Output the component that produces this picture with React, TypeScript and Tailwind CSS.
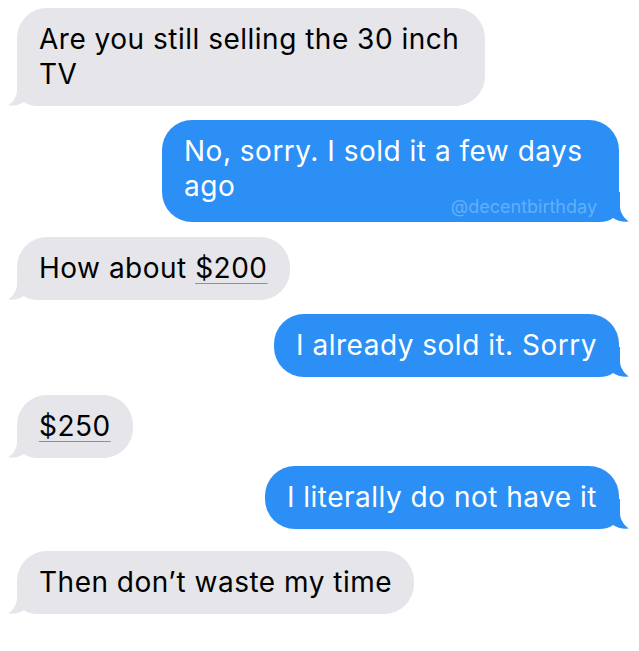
const GRAY = "#e5e5ea";
const BLUE = "#2b8ff6";

function TailLeft() {
  return (
    <svg
      className="absolute bottom-0 left-[-9px]"
      width="40"
      height="30"
      viewBox="0 0 40 30"
    >
      <path
        d="M9 0 L9 14 C9 21 5 26 0 29.6 C7 30.2 12 28.5 16 26 C19 28.5 24 30 30 30 L40 30 L40 0 Z"
        fill={GRAY}
      />
    </svg>
  );
}

function TailRight() {
  return (
    <svg
      className="absolute bottom-0 right-[-10px]"
      width="40"
      height="30"
      viewBox="0 0 40 30"
    >
      <path
        d="M31 0 L31 14 C31 21 35 26 40 29.6 C33 30.2 28 28.5 24 26 C21 28.5 16 30 10 30 L0 30 L0 0 Z"
        fill={BLUE}
      />
    </svg>
  );
}

function Received({ children, className = "" }: { children: React.ReactNode; className?: string }) {
  return (
    <div className={`self-start ml-[17px] ${className}`}>
      <div className="relative rounded-[30px] bg-[#e5e5ea] px-[22px] py-[14px] text-[28px] leading-[35px] tracking-[0.5px] text-black">
        <TailLeft />
        <span className="relative">{children}</span>
      </div>
    </div>
  );
}

function Sent({
  children,
  className = "",
  watermark = false,
}: {
  children: React.ReactNode;
  className?: string;
  watermark?: boolean;
}) {
  return (
    <div className={`self-end mr-[20px] ${className}`}>
      <div className="relative rounded-[30px] bg-[#2b8ff6] px-[22px] py-[14px] text-[28px] leading-[35px] tracking-[0.5px] text-white">
        <TailRight />
        <span className="relative">{children}</span>
        {watermark && (
          <span className="absolute right-[22px] bottom-[6px] text-[18px] leading-none tracking-normal text-[#62aff8]">
            @decentbirthday
          </span>
        )}
      </div>
    </div>
  );
}

function Amount({ children }: { children: React.ReactNode }) {
  return (
    <span className="underline decoration-[#8e8e93] decoration-1 underline-offset-[5px]">
      {children}
    </span>
  );
}

export default function App() {
  return (
    <div
      className="w-[639px] h-[651px] bg-white flex flex-col pt-[8px] overflow-hidden"
      style={{ fontFamily: "Inter, 'Liberation Sans', Arial, sans-serif" }}
    >
      <Received>
        <span className="inline-block w-[424px]">
          Are you still selling the 30 inch
          <br />
          TV
        </span>
      </Received>
      <Sent className="mt-[14px]" watermark>
        <span className="inline-block w-[413px] pb-[4px]">
          No, sorry. I sold it a few days
          <br />
          ago
        </span>
      </Sent>
      <Received className="mt-[15px]">
        How about <Amount>$200</Amount>
      </Received>
      <Sent className="mt-[14px]">I already sold it. Sorry</Sent>
      <Received className="mt-[18px]">
        <Amount>$250</Amount>
      </Received>
      <Sent className="mt-[8px]">I literally do not have it</Sent>
      <Received className="mt-[22px]">Then don’t waste my time</Received>
    </div>
  );
}
